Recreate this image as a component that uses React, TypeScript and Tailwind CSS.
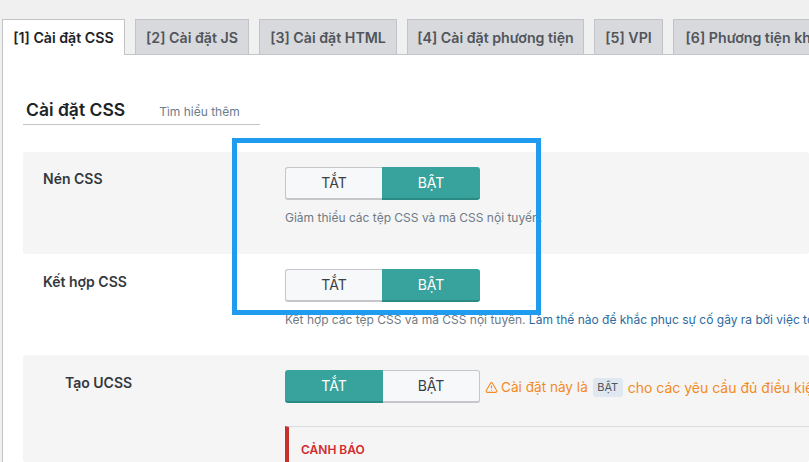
import { TriangleAlert } from "lucide-react";

const tabs = [
  { label: "[1] Cài đặt CSS", width: "w-[123px]", active: true },
  { label: "[2] Cài đặt JS", width: "w-[114px]" },
  { label: "[3] Cài đặt HTML", width: "w-[138px]" },
  { label: "[4] Cài đặt phương tiện", width: "w-[177px]" },
  { label: "[5] VPI", width: "w-[69px]" },
  { label: "[6] Phương tiện khác", width: "w-[167px]" },
];

const Toggle = ({ on }: { on: boolean }) => (
  <div className="flex h-[33px] w-[195px] shrink-0 text-[14px] leading-none">
    <div
      className={
        on
          ? "flex w-[97px] items-center justify-center rounded-l-[3px] border border-b-2 border-[#c4c6c9] border-r-0 bg-[#f7f8fa] text-[#3a3f45]"
          : "flex w-[98px] items-center justify-center rounded-l-[3px] border-b-2 border-[#2b8a84] bg-[#38a29c] text-white"
      }
    >
      TẮT
    </div>
    <div
      className={
        on
          ? "flex flex-1 items-center justify-center rounded-r-[3px] border-b-2 border-[#2b8a84] bg-[#38a29c] text-white"
          : "flex flex-1 items-center justify-center rounded-r-[3px] border border-b-2 border-[#c4c6c9] border-l-0 bg-[#f7f8fa] text-[#3a3f45]"
      }
    >
      BẬT
    </div>
  </div>
);

export default function App() {
  return (
    <div className="relative h-[462px] w-[809px] overflow-hidden bg-[#f0f0f1] font-['Inter','Liberation_Sans',sans-serif]">
      <div className="flex h-[54px] items-end gap-[10px] whitespace-nowrap pl-[2px]">
        {tabs.map((tab) => (
          <div
            key={tab.label}
            className={`flex shrink-0 items-center justify-center border border-[#c3c4c7] pt-[1px] text-[14.2px] font-semibold ${tab.width} ${
              tab.active
                ? "relative z-10 -mb-px h-[36px] border-b-0 bg-white text-[#1f2328]"
                : "h-[35px] border-b-0 bg-[#d8d9dc] text-[#50555b]"
            }`}
          >
            {tab.label}
          </div>
        ))}
      </div>

      <div className="ml-[2px] h-[408px] border-l border-t border-[#c3c4c7] bg-white pl-[20px]">
        <div className="flex h-[70px] w-[237px] items-end border-b border-[#c3c4c7] pl-[3px]">
          <span className="text-[17.5px] font-semibold leading-[28px] text-[#1d2327]">Cài đặt CSS</span>
          <span className="ml-[34px] pb-[2px] text-[12px] leading-[20px] text-[#6b7c8c]">Tìm hiểu thêm</span>
        </div>

        <div className="mt-[27px] flex h-[102px] rounded-[3px] bg-[#f5f5f6]">
          <div className="w-[262px] shrink-0 pl-[20px] pt-[18px] text-[14px] font-semibold leading-[18px] text-[#33383d]">Nén CSS</div>
          <div className="pt-[15px]">
            <Toggle on />
            <p className="mt-[10px] whitespace-nowrap text-[12px] leading-[16px] text-[#6f7a85]">
              Giảm thiểu các tệp CSS và mã CSS nội tuyến.
            </p>
          </div>
        </div>

        <div className="flex h-[101px]">
          <div className="w-[262px] shrink-0 pl-[20px] pt-[19px] text-[14px] font-semibold leading-[18px] text-[#33383d]">Kết hợp CSS</div>
          <div className="pt-[15px]">
            <Toggle on />
            <p className="mt-[10px] whitespace-nowrap text-[12px] leading-[16px] text-[#6f7a85]">
              Kết hợp các tệp CSS và mã CSS nội tuyến.{" "}
              <span className="text-[#2b6aa0]">Làm thế nào để khắc phục sự cố gây ra bởi việc tối ưu hóa CSS</span>
            </p>
          </div>
        </div>

        <div className="flex h-[107px] rounded-[3px] bg-[#f5f5f6]">
          <div className="w-[262px] shrink-0 pl-[42px] pt-[19px] text-[14px] font-semibold leading-[18px] text-[#33383d]">Tạo UCSS</div>
          <div className="min-w-0 flex-1 pt-[15px]">
            <div className="flex items-center whitespace-nowrap">
              <Toggle on={false} />
              <div className="ml-[5px] flex items-center pt-[1px] text-[13.6px] text-[#f48a1d]">
                <TriangleAlert className="mr-[3px] size-[13px]" strokeWidth={2} />
                <span>Cài đặt này là</span>
                <span className="mx-[5px] rounded-[3px] bg-[#dfe7f0] px-[4.5px] text-[11px] leading-[19px] text-[#50575e]">BẬT</span>
                <span className="text-[14px]">cho các yêu cầu đủ điều kiện.</span>
              </div>
            </div>
            <div className="mt-[23px] h-[60px] border-l-4 border-t border-[#c9302c] border-t-[#dcdcde] pl-[12px] pt-[14px]">
              <span className="block text-[12px] font-semibold leading-[18px] text-[#d12b2b]">CẢNH BÁO</span>
            </div>
          </div>
        </div>
      </div>

      <div className="absolute left-[232px] top-[138px] h-[177px] w-[309px] border-[5px] border-[#1f9cef]" />
    </div>
  );
}
